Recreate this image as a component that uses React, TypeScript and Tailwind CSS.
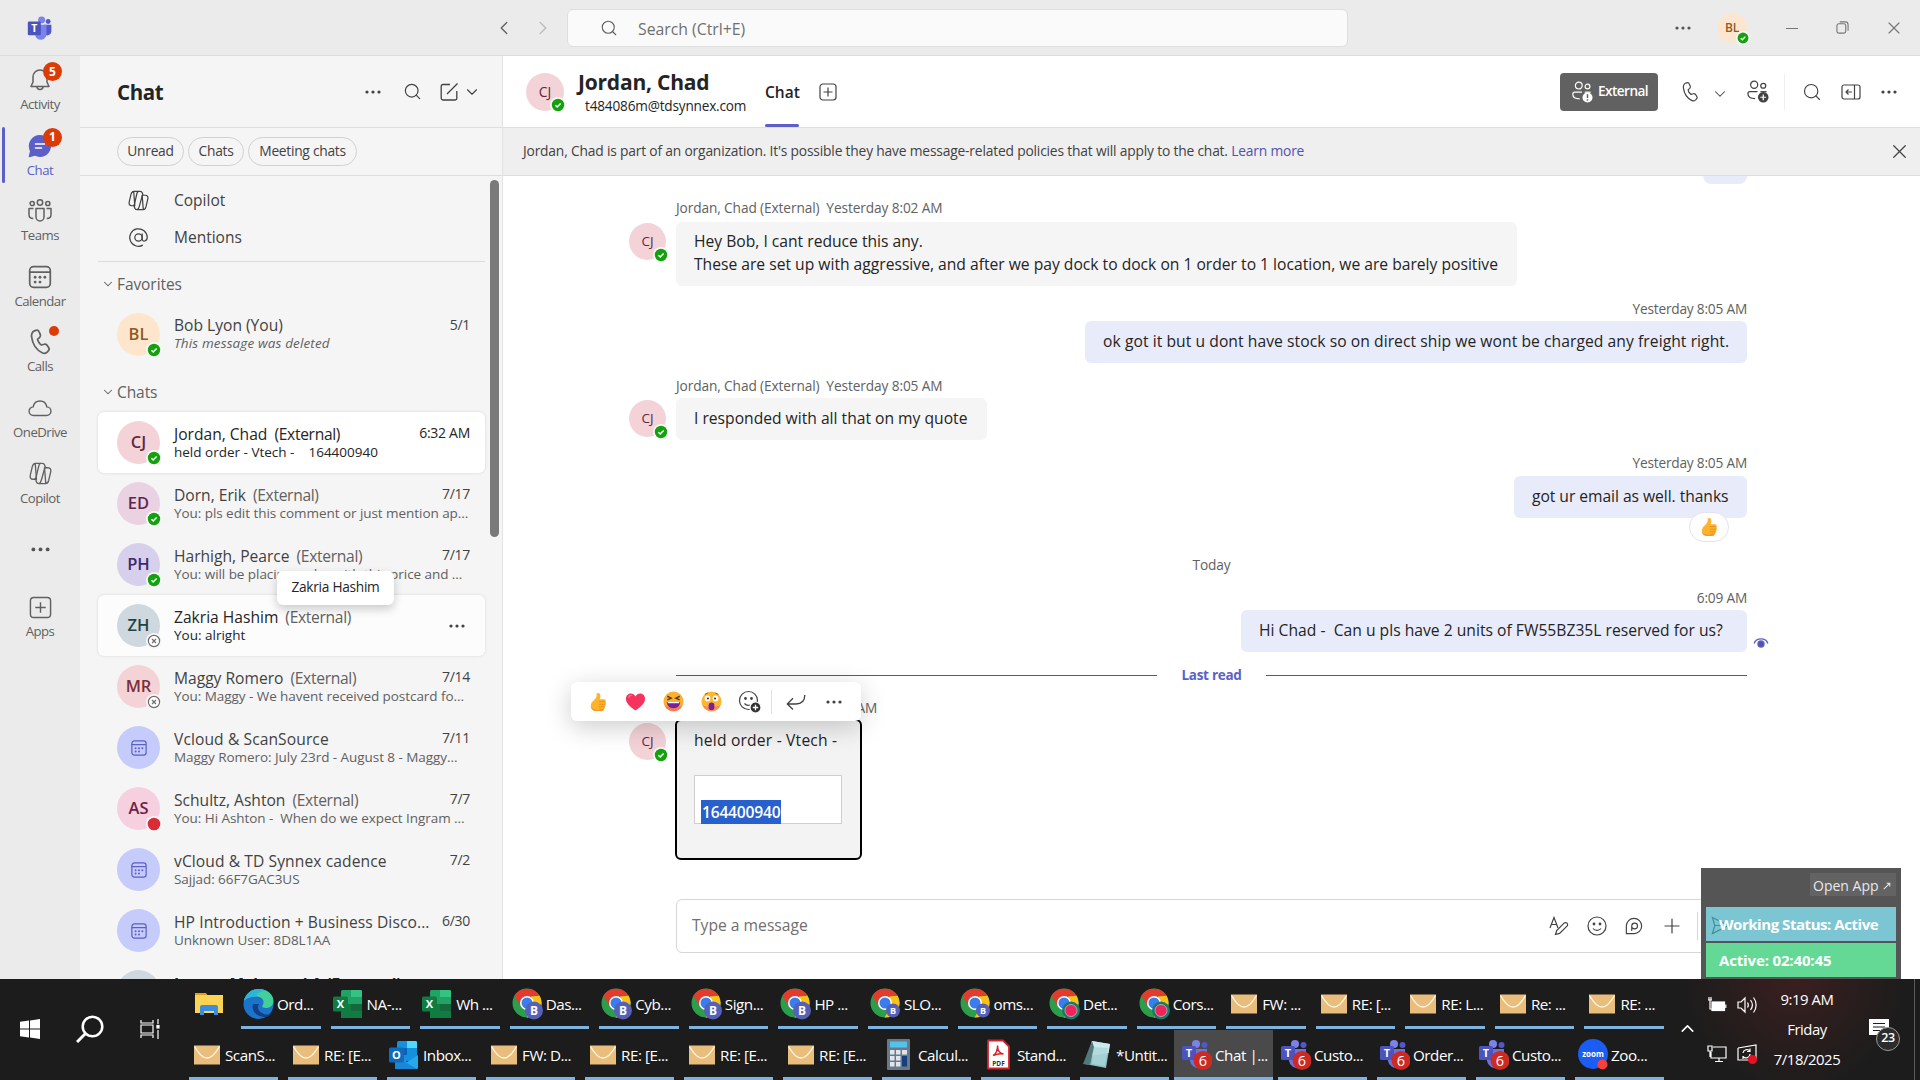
import type { ReactNode } from 'react'
import { ChevronDown, ChevronLeft, ChevronRight, ChevronUp, Search, X, Plus } from 'lucide-react'
import clsx from 'clsx'

type Status = 'available' | 'offline' | 'busy' | null

type ChatItem = {
  initials?: string
  color: string
  name: string
  external?: boolean
  preview: string
  date?: string
  status: Status
  state?: 'selected' | 'hover'
}

const chats: ChatItem[] = [
  { initials: 'CJ', color: 'bg-[#f4d3d8] text-[#5c2a3c]', name: 'Jordan, Chad', external: true, preview: 'held order - Vtech -    164400940', date: '6:32 AM', status: 'available', state: 'selected' },
  { initials: 'ED', color: 'bg-[#ebd2e3] text-[#5e2750]', name: 'Dorn, Erik', external: true, preview: 'You: pls edit this comment or just mention ap...', date: '7/17', status: 'available' },
  { initials: 'PH', color: 'bg-[#d7d0ec] text-[#3b2a70]', name: 'Harhigh, Pearce', external: true, preview: 'You: will be placing order with this price and ...', date: '7/17', status: 'available' },
  { initials: 'ZH', color: 'bg-[#cfd8de] text-[#1f4448]', name: 'Zakria Hashim', external: true, preview: 'You: alright', status: 'offline', state: 'hover' },
  { initials: 'MR', color: 'bg-[#f4d3d6] text-[#7a2f3d]', name: 'Maggy Romero', external: true, preview: 'You: Maggy - We havent received postcard fo...', date: '7/14', status: 'offline' },
  { color: 'bg-[#c5cbfa]', name: 'Vcloud & ScanSource', preview: 'Maggy Romero: July 23rd - August 8 - Maggy...', date: '7/11', status: null },
  { initials: 'AS', color: 'bg-[#f6d0df] text-[#6e2145]', name: 'Schultz, Ashton', external: true, preview: 'You: Hi Ashton -  When do we expect Ingram ...', date: '7/7', status: 'busy' },
  { color: 'bg-[#c5cbfa]', name: 'vCloud & TD Synnex cadence', preview: 'Sajjad: 66F7GAC3US', date: '7/2', status: null },
  { color: 'bg-[#c5cbfa]', name: 'HP Introduction + Business Disco...', preview: 'Unknown User: 8D8L1AA', date: '6/30', status: null },
]

function Dots({ className = 'w-4' }: { className?: string }) {
  return (
    <svg viewBox="0 0 16 4" className={className} fill="currentColor">
      <circle cx="2" cy="2" r="1.6" />
      <circle cx="8" cy="2" r="1.6" />
      <circle cx="14" cy="2" r="1.6" />
    </svg>
  )
}

function StatusDot({ status, size = 'w-4 h-4' }: { status: Status; size?: string }) {
  if (!status) return null
  return (
    <svg viewBox="0 0 16 16" className={clsx('absolute', size)}>
      <circle cx="8" cy="8" r="8" fill="#f7f7f7" />
      {status === 'available' && (
        <>
          <circle cx="8" cy="8" r="6.2" fill="#13a10e" />
          <path d="M5.4 8.3l1.8 1.7 3.4-3.5" fill="none" stroke="#fff" strokeWidth="1.5" />
        </>
      )}
      {status === 'busy' && <circle cx="8" cy="8" r="6.3" fill="#d92c37" />}
      {status === 'offline' && (
        <>
          <circle cx="8" cy="8" r="5.6" fill="#fff" stroke="#6e6e6e" strokeWidth="1.2" />
          <path d="M6 6l4 4M10 6l-4 4" stroke="#6e6e6e" strokeWidth="1.2" />
        </>
      )}
    </svg>
  )
}

function CalendarIcon({ className }: { className?: string }) {
  return (
    <svg viewBox="0 0 24 24" className={className} fill="none" stroke="currentColor" strokeWidth="1.6">
      <rect x="2.5" y="2.5" width="19" height="19" rx="3.5" />
      <path d="M2.5 7.5h19" />
      <g fill="currentColor" stroke="none">
        <circle cx="7.5" cy="12.2" r="1.3" />
        <circle cx="12" cy="12.2" r="1.3" />
        <circle cx="16.5" cy="12.2" r="1.3" />
        <circle cx="7.5" cy="16.7" r="1.3" />
        <circle cx="12" cy="16.7" r="1.3" />
      </g>
    </svg>
  )
}

function CopilotIcon({ className }: { className?: string }) {
  return (
    <svg viewBox="0 0 24 24" className={className} fill="none" stroke="currentColor" strokeWidth="1.4" strokeLinejoin="round">
      <path d="M6.500 1.500h7.200c1.500 0 2.300.6 2.700 1.900l.8 2.600M7.800 18H4.200C1.800 18 .7 16.200 1.400 13.500l2-8.500C4 2.800 5 1.500 6.500 1.500z" />
      <path d="M17.500 22.500h-7.200c-1.500 0-2.200-.6-2.600-1.900L6.900 18M16.200 6h3.600c2.400 0 3.500 1.800 2.800 4.500l-2 8.500c-.6 2.200-1.600 3.500-3.100 3.500z" />
      <path d="M12.200 1.500c-1.200.3-1.700 1.200-2 2.500L7.500 15.500c-.3 1.300-.8 2.300-1.800 2.500M16.500 6L13 18.500c-.4 1.700-1 3.500-2.500 4" />
    </svg>
  )
}

function PhoneIcon({ className, width = 1.5 }: { className?: string; width?: number }) {
  return (
    <svg viewBox="0 0 24 24" className={className} fill="none" stroke="currentColor" strokeWidth={width} strokeLinejoin="round">
      <path d="M7.100 2.400l1.500-.4c1.100-.3 2.200.2 2.600 1.200l1 2.300c.4.9.2 1.900-.5 2.600L9.900 9.700c.2 1.400 1.900 4.200 3.300 4.900l2.300-.7c.9-.3 1.900.1 2.500.8l1.400 2.100c.6.9.5 2.100-.3 2.800l-1 1c-1.100 1-2.600 1.400-3.900.8C8.900 18.900 5.500 13.200 4.800 7.500c-.3-1.600.5-4.600 2.300-5.100z" />
    </svg>
  )
}

function TeamsPeople({ className }: { className?: string }) {
  return (
    <svg viewBox="0 0 24 24" className={className} fill="none" stroke="currentColor" strokeWidth="1.5">
      <circle cx="12" cy="3.500" r="2.700" />
      <circle cx="4.200" cy="4.500" r="2.100" />
      <circle cx="19.800" cy="4.500" r="2.100" />
      <path d="M8 9.500h8v8.500a4 4 0 0 1-8 0z" strokeLinejoin="round" />
      <path d="M5.500 9.500H1v6c0 2.300 1.600 4 4.200 4M18.500 9.500H23v6c0 2.300-1.600 4-4.200 4" strokeLinejoin="round" />
    </svg>
  )
}

function PeopleBadge({ className, mark }: { className?: string; mark: 'plus' | 'alert' }) {
  return (
    <svg viewBox="0 0 24 24" className={className} fill="none" stroke="currentColor" strokeWidth="1.3">
      <circle cx="8.500" cy="5" r="3.700" />
      <circle cx="18" cy="6" r="2.600" />
      <path d="M12 12.200H4.200c-1.300 0-2.200.9-2.200 2.200 0 3.400 2.800 5 7.500 5" />
      <path d="M15 12.200h6.500" />
      <circle cx="18" cy="18" r="5.500" fill="currentColor" stroke="none" />
      {mark === 'plus' ? (
        <path d="M18 15v6M15 18h6" stroke="#fff" />
      ) : (
        <path d="M18 14.500v4M18 20v1.600" stroke="#616161" strokeWidth="1.6" />
      )}
    </svg>
  )
}

function TeamsLogo({ className }: { className?: string }) {
  return (
    <svg viewBox="0 0 32 32" className={className}>
      <circle cx="26" cy="8" r="3" fill="#5059c9" />
      <path d="M21 12h9v9a5 5 0 0 1-9 2z" fill="#5059c9" />
      <circle cx="18" cy="6" r="4.300" fill="#7b83eb" />
      <path d="M10 12h14v11a7 7 0 0 1-14 1z" fill="#7b83eb" />
      <rect x="1" y="8" width="16" height="17" rx="1.500" fill="#4b53bc" />
      <text x="9" y="21.500" fontSize="13" fontWeight="bold" fill="#fff" textAnchor="middle" fontFamily="Open Sans">
        T
      </text>
    </svg>
  )
}

function ThumbsUp({ className }: { className?: string }) {
  return (
    <svg viewBox="0 0 20 22" className={className}>
      <path d="M10 1c2 0 3 1.500 2.600 4l-.6 3h4.500c2 0 2.500 1.500 1.800 2.800.7.800.7 2-.1 2.700.5.9.3 2-.6 2.600.300 1-.100 2-1 2.500-.5 1.600-1.600 2.400-3.600 2.400H8c-3.500 0-6-2-6-5.500 0-3.700 2-5 4-7 1.500-1.500 2.500-3 2.500-5C8.500 1.800 9 1 10 1z" fill="#fdb32b" />
      <path d="M11 10.500h6.500M11 13.500h7M11 16.300h6.200M11.500 19h5" stroke="#e88a1c" strokeWidth=".9" />
      <path d="M2.500 17c1 3 3 4 6 4h4.500c1.500 0 2.500-.5 3-1.500-4 .5-9.500.5-13.500-2.500z" fill="#f58c2e" opacity=".7" />
    </svg>
  )
}

function Heart({ className }: { className?: string }) {
  return (
    <svg viewBox="0 0 22 20" className={className}>
      <path d="M11 19C7 16 1 12 1 6.500 1 3.500 3.200 1 6 1c2.200 0 4 1.200 5 3.200C12 2.200 13.800 1 16 1c2.800 0 5 2.500 5 5.500C21 12 15 16 11 19z" fill="#f5335d" />
      <path d="M4 5c.5-1.500 1.500-2 2.500-2" stroke="#ff7b95" strokeWidth="1.300" fill="none" strokeLinecap="round" />
    </svg>
  )
}

function Laugh({ className }: { className?: string }) {
  return (
    <svg viewBox="0 0 22 22" className={className}>
      <circle cx="11" cy="11" r="10.500" fill="#fdb02f" />
      <path d="M1.500 15a10.500 10.500 0 0 0 19 0c-5 3-14 3-19 0z" fill="#f7775a" />
      <path d="M4.500 5.500l4 2-4 1.800M17.500 5.500l-4 2 4 1.800" stroke="#5b3a24" strokeWidth="1.500" fill="none" />
      <path d="M4 11.500h14c0 4-3 6.500-7 6.500s-7-2.500-7-6.500z" fill="#7a1fa0" />
      <path d="M5 11.500h12v1.300H5z" fill="#fff" />
    </svg>
  )
}

function Surprised({ className }: { className?: string }) {
  return (
    <svg viewBox="0 0 22 22" className={className}>
      <circle cx="11" cy="11" r="10.500" fill="#fdb62f" />
      <path d="M1.500 15a10.500 10.500 0 0 0 19 0c-5 2-14 2-19 0z" fill="#f88c5a" />
      <circle cx="6.800" cy="7.800" r="3" fill="#fff" />
      <circle cx="15.200" cy="7.800" r="3" fill="#fff" />
      <circle cx="7.300" cy="7.800" r="1.100" fill="#402a32" />
      <circle cx="14.700" cy="7.800" r="1.100" fill="#402a32" />
      <path d="M4 3.500l3-1.200M18 3.500l-3-1.200" stroke="#8a5320" strokeWidth="1" />
      <rect x="8" y="12" width="6" height="8" rx="3" fill="#7a1fa0" />
    </svg>
  )
}

function RailItem({ icon, label, active, badge }: { icon: ReactNode; label: string; active?: boolean; badge?: ReactNode }) {
  return (
    <div className={clsx('relative flex h-[65.6px] flex-col items-center pt-3 text-[13.2px]', active ? 'text-[#5b5fc7]' : 'text-[#616161]')}>
      {active && <span className="absolute left-0.5 top-[5px] h-14 w-[3px] rounded bg-[#5b5fc7]" />}
      <div className="relative flex h-6 w-6 items-center justify-center">
        {icon}
        {badge}
      </div>
      <span className="mt-[3px] leading-[18px] tracking-[-0.04em]">{label}</span>
    </div>
  )
}

function CountBadge({ children }: { children: ReactNode }) {
  return (
    <span className="absolute -top-[6px] left-[15px] flex h-[19px] w-[19px] items-center justify-center rounded-full bg-[#dc3b06] text-[12px] font-bold text-white">
      {children}
    </span>
  )
}

function Rail() {
  return (
    <nav className="w-20 shrink-0 bg-[#ebebeb]">
      <RailItem
        label="Activity"
        badge={<CountBadge>5</CountBadge>}
        icon={
          <svg viewBox="0 0 24 24" className="h-6 w-6" fill="none" stroke="currentColor" strokeWidth="1.5" strokeLinejoin="round">
            <path d="M12 2a7 7 0 0 0-7 7v5l-2 4.500h18L19 14V9a7 7 0 0 0-7-7zM9 18.500a3 3 0 0 0 6 0" />
          </svg>
        }
      />
      <RailItem
        label="Chat"
        active
        badge={<CountBadge>1</CountBadge>}
        icon={
          <svg viewBox="0 0 24 24" className="h-6 w-6">
            <path d="M12 1a11 11 0 1 1-5 20.800l-5.500 1.400c-.5.100-.9-.3-.8-.8L2 17A11 11 0 0 1 12 1z" fill="#5b5fc7" />
            <path d="M7.500 10h9M7.500 14h6" stroke="#fff" strokeWidth="1.6" strokeLinecap="round" />
          </svg>
        }
      />
      <RailItem label="Teams" icon={<TeamsPeople className="h-6 w-6" />} />
      <RailItem label="Calendar" icon={<CalendarIcon className="h-[26px] w-[26px] shrink-0" />} />
      <RailItem
        label="Calls"
        badge={<span className="absolute -top-1 right-[-7px] h-2.5 w-2.5 rounded-full bg-[#dc3b06]" />}
        icon={<PhoneIcon className="h-7 w-7 shrink-0" />}
      />
      <RailItem
        label="OneDrive"
        icon={
          <svg viewBox="0 0 24 24" className="h-6 w-6" fill="none" stroke="currentColor" strokeWidth="1.4">
            <path d="M5.500 19.500a4.300 4.300 0 0 1-.3-8.600C5.800 7.500 8.500 5 12 5s6.200 2.500 6.800 5.900a4.300 4.300 0 0 1-.3 8.600z" />
          </svg>
        }
      />
      <RailItem label="Copilot" icon={<CopilotIcon className="h-[23px] w-[23px]" />} />
      <div className="flex h-[66px] items-center justify-center pt-0.5 text-[#555]">
        <Dots className="w-[19px]" />
      </div>
      <div className="pt-0.5">
        <RailItem
          label="Apps"
          icon={
            <svg viewBox="0 0 24 24" className="h-[23px] w-[23px]" fill="none" stroke="currentColor" strokeWidth="1.5">
              <rect x="1.500" y="1.500" width="21" height="21" rx="3.500" />
              <path d="M12 6.500v11M6.500 12h11" />
            </svg>
          }
        />
      </div>
    </nav>
  )
}

function TitleBar() {
  return (
    <header className="flex h-14 shrink-0 items-center border-b border-[#dcdcdc] bg-[#ebebeb]">
      <div className="flex w-20 justify-center">
        <TeamsLogo className="h-[26px] w-[26px]" />
      </div>
      <div className="flex flex-1 items-center pl-[413px]">
        <ChevronLeft className="h-[22px] w-[22px] text-[#616161]" strokeWidth={1.5} />
        <ChevronRight className="ml-[17px] h-[22px] w-[22px] text-[#bdbdbd]" strokeWidth={1.5} />
        <div className="ml-[13px] mt-px flex h-[38px] w-[781px] items-center rounded-md border border-[#dedede] bg-[#fafafa]">
          <Search className="ml-8 h-[18px] w-[18px] text-[#616161]" strokeWidth={1.5} />
          <span className="ml-5 mt-1 text-[15.8px] text-[#707070]">Search (Ctrl+E)</span>
        </div>
      </div>
      <div className="flex items-center pr-4">
        <Dots className="w-4 text-[#555]" />
        <div className="relative ml-[26px] flex h-[30px] w-[30px] items-center justify-center rounded-full bg-[#fde6cf] text-xs font-semibold tracking-tight text-[#8e5a26]">
          BL
          <span className="absolute left-[19px] top-[18px]">
            <StatusDot status="available" size="w-[14px] h-[14px]" />
          </span>
        </div>
        <span className="ml-[39px] mt-px h-px w-3 bg-[#777]" />
        <svg viewBox="0 0 14 14" className="ml-[38px] h-[13px] w-[13px]" fill="none" stroke="#777" strokeWidth="1.2">
          <rect x="1" y="3" width="9.500" height="10" rx="2" />
          <path d="M4 1h6c1.800 0 3 1.200 3 3v6.500" />
        </svg>
        <X className="ml-[35px] h-5 w-5 text-[#777]" strokeWidth={1.4} />
      </div>
    </header>
  )
}

function Avatar({ item }: { item: ChatItem }) {
  return (
    <div className={clsx('relative flex h-[43px] w-[43px] shrink-0 items-center justify-center rounded-full text-[16.5px] font-semibold', item.color)}>
      {item.initials ?? <CalendarIcon className="h-[18px] w-[18px] text-[#5b5fc7]" />}
      <span className="absolute left-[29px] top-[29px]">
        <StatusDot status={item.status} />
      </span>
    </div>
  )
}

function ChatRow({ item }: { item: ChatItem }) {
  const strong = item.state !== undefined
  return (
    <div
      className={clsx(
        'flex h-[61px] items-center rounded-md pl-[19px] pr-[15px]',
        item.state === 'selected' && 'bg-white shadow-[0_0_3px_rgba(0,0,0,0.14)]',
        item.state === 'hover' && 'bg-[#fcfcfc] shadow-[0_0_3px_rgba(0,0,0,0.12)]',
      )}
    >
      <Avatar item={item} />
      <div className="ml-[14px] min-w-0 flex-1">
        <div className={clsx('flex items-center justify-between leading-[19px]', strong ? 'text-[#242424]' : 'text-[#424242]')}>
          <span className={clsx('whitespace-nowrap text-[15.6px]', !item.external && 'tracking-[0.006em]')}>
            {item.name}
            {item.external && <span className={clsx('ml-[7px] tracking-[-0.02em]', item.state !== 'selected' && 'text-[#616161]')}>(External)</span>}
          </span>
          {item.date && <span className="-mt-1 text-[14px] tracking-[-0.02em]">{item.date}</span>}
        </div>
        <div className={clsx('whitespace-pre text-[13.5px] leading-[17px]', strong ? 'text-[#242424]' : 'tracking-[-0.004em] text-[#616161]')}>{item.preview}</div>
      </div>
      {item.state === 'hover' && <Dots className="mr-[5px] w-4 text-[#424242]" />}
    </div>
  )
}

function SectionTitle({ children }: { children: ReactNode }) {
  return (
    <div className="flex items-center gap-1 pl-[3px] text-[15.5px] leading-5 tracking-[-0.005em] text-[#616161]">
      <ChevronDown className="-mr-0.5 h-3.5 w-3.5 shrink-0" strokeWidth={1.8} />
      {children}
    </div>
  )
}

function ChatList() {
  return (
    <aside className="flex w-[423px] shrink-0 flex-col border-r border-[#e3e3e3] bg-[#f5f5f5]">
      <div className="flex h-[72px] shrink-0 items-center border-b border-[#dedede] pl-[37px] text-[#424242]">
        <h1 className="flex-1 pt-0.5 text-[20.5px] font-bold tracking-[-0.02em] text-[#242424]">Chat</h1>
        <Dots className="w-4" />
        <Search className="ml-[22px] h-[19px] w-[19px]" strokeWidth={1.5} />
        <svg viewBox="0 0 20 20" className="ml-[17px] h-5 w-5" fill="none" stroke="currentColor" strokeWidth="1.3">
          <path d="M11 2.500H4A1.800 1.800 0 0 0 2.200 4.300v12A1.800 1.800 0 0 0 4 18h12a1.800 1.800 0 0 0 1.800-1.800V9M8 12L18.500 1.500" />
        </svg>
        <ChevronDown className="ml-1 mr-[21px] h-[18px] w-[18px]" strokeWidth={1.5} />
      </div>
      <div className="flex h-12 shrink-0 items-center gap-1 border-b border-[#dedede] pl-[37px] text-[13.8px] tracking-[-0.02em] text-[#424242]">
        <span className="flex h-[29px] w-[67px] items-center justify-center rounded-full border border-[#d1d1d1]">Unread</span>
        <span className="flex h-[29px] w-14 items-center justify-center rounded-full border border-[#d1d1d1]">Chats</span>
        <span className="flex h-[29px] w-[109px] items-center justify-center rounded-full border border-[#d1d1d1]">Meeting chats</span>
      </div>
      <div className="relative flex-1 overflow-hidden pl-[18px] pr-[17px]">
        <div className="absolute right-[3px] top-1 h-[357px] w-[9px] rounded-full bg-[#7a7a7a]" />
        <div className="flex h-[37px] items-center pl-[30px] pt-3 text-[15.5px] text-[#424242]">
          <CopilotIcon className="h-[21px] w-[21px]" />
          <span className="ml-[25px]">Copilot</span>
        </div>
        <div className="flex h-[37px] items-center pl-[30px] pt-3 text-[15.5px] text-[#424242]">
          <svg viewBox="0 0 24 24" className="h-[21px] w-[21px]" fill="none" stroke="currentColor" strokeWidth="1.4">
            <circle cx="12" cy="12" r="4.200" />
            <path d="M16.200 7.500v6.300c0 3.600 5.800 3 5.800-2A10 10 0 1 0 17 20.700" />
          </svg>
          <span className="ml-[25px]">Mentions</span>
        </div>
        <div className="mb-3 mt-[11px] h-px bg-[#dcdcdc]" />
        <SectionTitle>Favorites</SectionTitle>
        <div className="mt-[10px] flex h-[61px] items-center pl-[19px] pr-[15px]">
          <Avatar item={{ initials: 'BL', color: 'bg-[#fde6cc] text-[#8e5a26]', name: '', preview: '', status: 'available' }} />
          <div className="-mt-0.5 ml-[14px] flex-1 text-[#424242]">
            <div className="flex justify-between leading-[19px]">
              <span className="text-[15.6px]">Bob Lyon (You)</span>
              <span className="-mt-px text-[14px] tracking-[-0.02em]">5/1</span>
            </div>
            <div className="text-[13.5px] italic leading-[17px] tracking-[0.01em] text-[#616161]">This message was deleted</div>
          </div>
        </div>
        <div className="mb-[10px] mt-[17px]">
          <SectionTitle>Chats</SectionTitle>
        </div>
        {chats.map((c) => (
          <ChatRow key={c.name} item={c} />
        ))}
        <div className="flex h-[61px] pl-[19px] pr-[15px] pt-[9px]">
          <div className="h-[43px] w-[43px] shrink-0 rounded-full bg-[#cfd8de]" />
          <div className="ml-[14px] flex flex-1 justify-between pt-[5px] text-[15.5px] font-bold leading-[19px] text-[#242424]">
            <span>Imran, Mehmood A (External)</span>
            <span className="text-[14px]">6/28</span>
          </div>
        </div>
        <div className="absolute left-[197px] top-[395px] flex h-[34px] w-[117px] items-center justify-center rounded-md bg-white pb-px text-[13.7px] tracking-[-0.02em] text-[#242424] shadow-[0_4px_10px_rgba(0,0,0,0.2)]">
          Zakria Hashim
        </div>
      </div>
    </aside>
  )
}

function MainHeader() {
  return (
    <div className="flex h-[72px] shrink-0 items-center border-b border-[#dedede] pl-[23px] text-[#424242]">
      <div className="relative flex h-[38px] w-[38px] items-center justify-center rounded-full bg-[#f4d3d8] text-[14px] font-medium text-[#5c2a3c]">
        CJ
        <span className="absolute left-[24px] top-[24px]">
          <StatusDot status="available" />
        </span>
      </div>
      <div className="ml-[14px] w-[187px] text-[#242424]">
        <div className="mt-1 text-[21px] font-bold leading-6 tracking-[-0.01em]">Jordan, Chad</div>
        <div className="pl-[7px] text-[13.6px] leading-6 tracking-[-0.013em]">t484086m@tdsynnex.com</div>
      </div>
      <div className="relative flex h-full w-[34px] items-center pt-0.5 text-[15.5px] font-semibold text-[#242424]">
        Chat
        <span className="absolute bottom-0 left-0 h-[3px] w-[34px] rounded bg-[#5b5fc7]" />
      </div>
      <svg viewBox="0 0 18 18" className="ml-5 h-[18px] w-[18px]" fill="none" stroke="currentColor" strokeWidth="1.2">
        <rect x="1" y="1" width="16" height="16" rx="3" />
        <path d="M9 4.500v9M4.500 9h9" />
      </svg>
      <div className="ml-auto flex h-[38px] w-[98px] items-center rounded bg-[#616161] pl-[11px] text-white">
        <PeopleBadge mark="alert" className="h-[22px] w-[22px]" />
        <span className="ml-[5px] text-[13.6px] font-semibold tracking-[-0.04em]">External</span>
      </div>
      <PhoneIcon className="ml-[21px] h-[22px] w-[22px]" width={1.3} />
      <ChevronDown className="ml-[10px] mt-1 h-[18px] w-[18px]" strokeWidth={1.4} />
      <PeopleBadge mark="plus" className="ml-[17px] h-[23px] w-[23px]" />
      <span className="ml-[15px] h-9 w-px bg-[#efefef]" />
      <Search className="ml-[17px] h-5 w-5" strokeWidth={1.4} />
      <svg viewBox="0 0 20 16" className="ml-[19px] h-4 w-5" fill="none" stroke="currentColor" strokeWidth="1.2">
        <rect x="1" y="1" width="18" height="14" rx="2" />
        <path d="M13.500 1v14M11 8H5M7.500 5.500L5 8l2.500 2.500" />
      </svg>
      <Dots className="ml-[20px] mr-[23px] w-4" />
    </div>
  )
}

function Meta({ children, right }: { children: ReactNode; right?: boolean }) {
  return (
    <div className={clsx('flex h-5 items-center whitespace-pre text-[13.7px] text-[#616161]', right ? 'justify-end tracking-[-0.015em]' : 'tracking-[-0.008em]')}>{children}</div>
  )
}

function Bubble({ children, className }: { children: ReactNode; className?: string }) {
  return <div className={clsx('relative rounded-md px-[18px] text-[#242424]', className)}>{children}</div>
}

function SenderAvatar() {
  return (
    <div className="relative ml-px mt-px flex h-[37px] w-[37px] shrink-0 items-center justify-center rounded-full bg-[#f4d3d8] text-[13.5px] font-medium text-[#5c2a3c]">
      CJ
      <span className="absolute left-6 top-[24px]">
        <StatusDot status="available" />
      </span>
    </div>
  )
}

function ReactionBar() {
  return (
    <div className="absolute -top-[39px] -left-[106px] z-10 flex h-[39px] w-[290px] items-center rounded-md bg-white pl-[17px] text-[#424242] shadow-[0_6px_26px_rgba(0,0,0,0.2)]">
      <ThumbsUp className="h-5 w-5" />
      <Heart className="ml-[17px] h-5 w-[21px]" />
      <Laugh className="ml-[17px] h-[21px] w-[21px]" />
      <Surprised className="ml-[17px] h-[21px] w-[21px]" />
      <svg viewBox="0 0 24 24" className="ml-[16px] h-6 w-6" fill="none" stroke="currentColor" strokeWidth="1.2">
        <circle cx="10.500" cy="10.500" r="9" />
        <circle cx="7.500" cy="8.500" r=".8" fill="currentColor" />
        <circle cx="13.500" cy="8.500" r=".8" fill="currentColor" />
        <path d="M6.500 13.500a5 5 0 0 0 5.500 1.500" />
        <circle cx="17.500" cy="17.500" r="5.500" fill="#333" stroke="#fff" />
        <path d="M17.500 14.800v5.400M14.800 17.500h5.400" stroke="#fff" strokeWidth="1.3" />
      </svg>
      <span className="ml-[9px] h-6 w-px bg-[#e0e0e0]" />
      <svg viewBox="0 0 20 16" className="ml-[14px] h-4 w-5" fill="none" stroke="currentColor" strokeWidth="1.3">
        <path d="M18.800 1c0 5.500-3 9-9 9H1.500M7 4.200L1.300 10 7 15.500" />
      </svg>
      <Dots className="ml-[20px] w-4" />
    </div>
  )
}

function Messages() {
  return (
    <div className="flex min-h-0 flex-1 flex-col pl-[125px] text-[15.65px]">
      <div className="flex w-[1119px] justify-end">
        <div className="h-2 w-11 rounded-b-lg bg-[#e8ebfa]" />
      </div>

      <div className="mt-[14px] pl-[48px]">
        <Meta>Jordan, Chad (External)  Yesterday 8:02 AM</Meta>
      </div>
      <div className="mt-1 flex">
        <SenderAvatar />
        <Bubble className="ml-[10px] h-16 w-[841px] bg-[#f5f5f5] pt-2 leading-[23px]">
          Hey Bob, I cant reduce this any.
          <br />
          <span className="whitespace-nowrap">These are set up with aggressive, and after we pay dock to dock on 1 order to 1 location, we are barely positive</span>
        </Bubble>
      </div>

      <div className="mt-[13px] flex w-[1119px] flex-col items-end">
        <Meta right>Yesterday 8:05 AM</Meta>
        <Bubble className="mt-0.5 flex h-[42px] w-[662px] items-center whitespace-nowrap bg-[#e8ebfa] tracking-[0.004em]">
          ok got it but u dont have stock so on direct ship we wont be charged any freight right.
        </Bubble>
      </div>

      <div className="mt-[13px] pl-[48px]">
        <Meta>Jordan, Chad (External)  Yesterday 8:05 AM</Meta>
      </div>
      <div className="mt-0.5 flex">
        <div className="pt-px">
          <SenderAvatar />
        </div>
        <Bubble className="ml-[10px] flex h-[42px] w-[311px] items-center bg-[#f5f5f5]">I responded with all that on my quote</Bubble>
      </div>

      <div className="mt-[13px] flex w-[1119px] flex-col items-end">
        <Meta right>Yesterday 8:05 AM</Meta>
        <Bubble className="mt-[3px] flex h-[42px] w-[233px] items-center whitespace-nowrap bg-[#e8ebfa] tracking-[-0.003em]">
          got ur email as well. thanks
          <span className="absolute right-[18px] top-9 flex h-[30px] w-10 items-center justify-center rounded-full border border-[#e3e3ea] bg-white">
            <ThumbsUp className="h-[22px] w-[18px]" />
          </span>
        </Bubble>
      </div>

      <div className="ml-[48px] mt-[37px] flex w-[1071px] justify-center">
        <Meta>Today</Meta>
      </div>

      <div className="mt-[13px] flex w-[1119px] flex-col items-end">
        <Meta right>6:09 AM</Meta>
        <Bubble className="mt-0.5 flex h-[42px] w-[506px] items-center whitespace-pre bg-[#e8ebfa] tracking-[0.001em]">
          Hi Chad -  Can u pls have 2 units of FW55BZ35L reserved for us?
          <svg viewBox="0 0 16 12" className="absolute -right-[22px] bottom-[3px] h-3 w-4" fill="none" stroke="#5b5fc7" strokeWidth="1.4">
            <path d="M1.200 6.500a7 6 0 0 1 13.600 0" />
            <circle cx="8" cy="7" r="3" fill="#4f52b2" />
          </svg>
        </Bubble>
      </div>

      <div className="ml-[48px] mt-[13px] flex h-5 w-[1071px] items-center gap-6 text-[13.5px] font-bold tracking-[-0.02em] text-[#5b5fc7]">
        <span className="h-px flex-1 bg-[#5054a5]" />
        Last read
        <span className="h-px flex-1 bg-[#5054a5]" />
      </div>

      <div className="mt-[13px] pl-[48px]">
        <Meta>{'Jordan, Chad (External)  6:32 AM'}</Meta>
      </div>
      <div className="mt-px flex">
        <div className="pt-[3px]">
          <SenderAvatar />
        </div>
        <div className="relative ml-[9px] h-[141px] w-[187px] rounded-md border-2 border-black bg-[#f3f3f3] pl-[17px] pt-[7px] leading-6 tracking-[0.012em] text-[#242424]">
          <ReactionBar />
          held order - Vtech -
          <div className="mt-[23px] h-[49px] w-[148px] border border-[#cfcfcf] bg-white pl-[6px] pt-6">
            <span className="block h-6 w-20 bg-[#2860ce] pl-px font-semibold leading-6 tracking-[-0.015em] text-white">164400940</span>
          </div>
        </div>
      </div>

      <div className="ml-[48px] mt-[39px] flex h-[54px] w-[1071px] shrink-0 items-center rounded-md border border-[#d6d6d6] pl-[15px] text-[#424242]">
        <span className="flex-1 text-[#707070]">Type a message</span>
        <svg viewBox="0 0 20 20" className="h-[20px] w-[20px]" fill="none" stroke="currentColor" strokeWidth="1.2">
          <path d="M1 12L5 1.500 9 12M2.500 8.500h5" />
          <path d="M6.500 18.500l1.200-4L15 7.200a2 2 0 0 1 3 3l-7.400 7.200z" />
        </svg>
        <svg viewBox="0 0 20 20" className="ml-[18px] h-[20px] w-[20px]" fill="none" stroke="currentColor" strokeWidth="1.2">
          <circle cx="10" cy="10" r="9" />
          <circle cx="7" cy="8" r=".8" fill="currentColor" />
          <circle cx="13" cy="8" r=".8" fill="currentColor" />
          <path d="M6 12.500c2 2.500 6 2.500 8 0" />
        </svg>
        <svg viewBox="0 0 20 20" className="ml-[18px] h-[18px] w-[18px]" fill="none" stroke="currentColor" strokeWidth="1.3">
          <path d="M1.500 18.500V10A8.500 8.500 0 1 1 10 18.500z" />
          <path d="M7.500 15.500v-5.500a3.200 3.200 0 1 1 3.200 3.200c-1.500 0-3-.8-3.200-2.200" />
        </svg>
        <Plus className="ml-[17px] h-6 w-6" strokeWidth={1.2} />
        <span className="ml-[13px] mr-12 h-7 w-px bg-[#d6d6d6]" />
      </div>
    </div>
  )
}

function StatusWidget() {
  return (
    <div className="absolute left-[1701px] top-[868px] flex h-[111px] w-[200px] flex-col bg-[#555] px-[5px] pt-[5px] text-white">
      <div className="flex h-[23px] w-[86px] items-center gap-1 self-end bg-[#636363] pl-[3px] pt-0.5 text-[14px] text-[#e8e8e8]">
        Open App
        <svg viewBox="0 0 10 10" className="h-2 w-2" fill="none" stroke="currentColor" strokeWidth="1.3">
          <path d="M1 9l7-7M4.500 1.500h4v4" />
        </svg>
      </div>
      <div className="relative mt-[11px] flex h-[34px] items-center bg-[#7bc6d2] pl-[13px] text-[15px] font-bold tracking-[-0.03em]">
        <svg viewBox="0 0 20 20" className="absolute left-[5px] top-[9px] h-[19px] w-[19px]" fill="none" stroke="#3f8d96" strokeWidth="1.2">
          <path d="M1.500 1.500L18.500 10 1.500 18.500 4 10zM4 10h7" />
        </svg>
        <span className="relative">Working Status: Active</span>
      </div>
      <div className="mt-0.5 flex h-[34px] items-center bg-[#64d995] pl-[13px] text-[15px] font-bold tracking-[-0.01em]">Active: 02:40:45</div>
    </div>
  )
}

type AppKind = 'edge' | 'excel' | 'chromeB' | 'chromeSmall' | 'chromeRed' | 'mail' | 'outlook' | 'calc' | 'pdf' | 'note' | 'teams' | 'zoom'

const topApps: [AppKind, string][] = [
  ['edge', 'Ord...'], ['excel', 'NA-...'], ['excel', 'Wh ...'], ['chromeB', 'Das...'], ['chromeB', 'Cyb...'], ['chromeB', 'Sign...'],
  ['chromeB', 'HP ...'], ['chromeSmall', 'SLO...'], ['chromeSmall', 'oms...'], ['chromeRed', 'Det...'], ['chromeRed', 'Cors...'],
  ['mail', 'FW: ...'], ['mail', 'RE: [...'], ['mail', 'RE: L...'], ['mail', 'Re: ...'], ['mail', 'RE: ...'],
]

const bottomApps: [AppKind, string][] = [
  ['mail', 'ScanS...'], ['mail', 'RE: [E...'], ['outlook', 'Inbox...'], ['mail', 'FW: D...'], ['mail', 'RE: [E...'], ['mail', 'RE: [E...'],
  ['mail', 'RE: [E...'], ['calc', 'Calcul...'], ['pdf', 'Stand...'], ['note', '*Untit...'], ['teams', 'Chat |...'], ['teams', 'Custo...'],
  ['teams', 'Order...'], ['teams', 'Custo...'], ['zoom', 'Zoo...'],
]

function SvgLabel({ x, y, size, children }: { x: number; y: number; size: number; children: string }) {
  return (
    <text x={x} y={y} fontSize={size} fontWeight="bold" fill="#fff" textAnchor="middle" fontFamily="Open Sans">
      {children}
    </text>
  )
}

function Chrome({ children }: { children?: ReactNode }) {
  return (
    <>
      <circle cx="16" cy="15" r="14.500" fill="#2c9e4b" />
      <path d="M3.500 7.800A14.500 14.500 0 0 1 28.500 7.800L16 9 10 18.500z" fill="#e33b2e" />
      <path d="M28.600 7.800A14.500 14.500 0 0 1 15.500 29.500L22 18.500 20 8.500z" fill="#fbc116" />
      <circle cx="16" cy="15" r="7" fill="#fff" />
      <circle cx="16" cy="15" r="5.500" fill="#3b7ded" />
      {children}
    </>
  )
}

function AppIcon({ kind }: { kind: AppKind }) {
  return (
    <svg viewBox="0 0 32 32" className="h-8 w-8 shrink-0">
      {kind === 'edge' && (
        <>
          <circle cx="16.500" cy="16" r="15" fill="#1b74c9" />
          <path d="M2 13C4 5 10 1 17 1c8 0 14.500 5 14.500 12 0 4.500-3.500 7-7.500 7-3 0-4.500-1-3.500-2.500 3-5-1-9-6-9C9 8.500 4 10 2 13z" fill="#43cf9a" />
          <path d="M2 13C4 5 10 1 17 1c3 0 5 .5 7 1.800C16 3 14 8 14.500 8.500 9 8.500 4 10 2 13z" fill="#2ab5dd" />
          <path d="M11 16c-2 7 4 13 12 13 3 0 5-1.500 7-4-3 2-7 2-10 0-4-2-5-6-3-9z" fill="#123f86" />
        </>
      )}
      {kind === 'excel' && (
        <>
          <rect x="9" y="2" width="21" height="28" rx="1.500" fill="#21a366" />
          <path d="M19 2h9.500a1.500 1.500 0 0 1 1.500 1.500V9H19z" fill="#33c481" />
          <path d="M9 16h21v12.500a1.500 1.500 0 0 1-1.500 1.500h-18A1.500 1.500 0 0 1 9 28.500z" fill="#107c41" />
          <path d="M19 16h11v7H19z" fill="#185c37" opacity=".6" />
          <rect x="1" y="8.500" width="15" height="15" rx="1.500" fill="#107c41" />
          <SvgLabel x={8.5} y={20} size={11}>X</SvgLabel>
        </>
      )}
      {kind === 'chromeB' && (
        <Chrome>
          <circle cx="23" cy="22.500" r="9" fill="#5560b8" />
          <SvgLabel x={23} y={27} size={12}>B</SvgLabel>
        </Chrome>
      )}
      {kind === 'chromeSmall' && (
        <Chrome>
          <circle cx="24" cy="22.500" r="7" fill="#5560b8" />
          <SvgLabel x={24} y={26} size={9}>B</SvgLabel>
        </Chrome>
      )}
      {kind === 'chromeRed' && (
        <Chrome>
          <circle cx="23" cy="22.500" r="9" fill="#157a6e" />
          <circle cx="23" cy="22.500" r="6" fill="#f0245c" stroke="#b9a3a0" strokeWidth="1" />
        </Chrome>
      )}
      {kind === 'mail' && (
        <>
          <rect x="4" y="6.500" width="26" height="19" fill="#e9bd7c" />
          <path d="M4.500 7.500c4 7 9 11.500 12.500 11.500S25.500 14.500 29.500 7.500" fill="none" stroke="#fff5e2" strokeWidth="1.5" />
        </>
      )}
      {kind === 'outlook' && (
        <>
          <rect x="9" y="2" width="20" height="20" rx="1.500" fill="#1490df" />
          <path d="M19 2h8.500A1.500 1.500 0 0 1 29 3.500V9H19z" fill="#50d9ff" />
          <path d="M9 9h10v7H9z" fill="#0a62b5" />
          <path d="M7 16l12 7 11-7v12.500a1.500 1.500 0 0 1-1.500 1.500H8.500A1.500 1.500 0 0 1 7 28.500z" fill="#28a8ea" />
          <path d="M7 30h22L7 17z" fill="#1a86d8" />
          <rect x="1" y="8.500" width="15" height="15" rx="1.500" fill="#0f6cbd" />
          <SvgLabel x={8.5} y={20} size={11}>O</SvgLabel>
        </>
      )}
      {kind === 'calc' && (
        <>
          <rect x="4" y="0" width="23" height="31" rx="1" fill="#67798a" />
          <rect x="7" y="2.500" width="17" height="6" fill="#54c3e8" />
          <path d="M7 11h4.500v4.500H7zM13 11h4.500v4.500H13zM19 11h5v4.500h-5zM7 17h4.500v4.500H7zM13 17h4.500v4.500H13zM7 23h4.500v4.500H7zM13 23h4.500v4.500H13z" fill="#dfe5ea" />
          <path d="M19 17h5v10.500h-5z" fill="#173f7a" />
        </>
      )}
      {kind === 'pdf' && (
        <>
          <path d="M6 1.500h15l6 6v22H6z" fill="#fff" stroke="#d5222a" strokeWidth="1.8" strokeLinejoin="round" />
          <path d="M11 16.500c3-1.500 5-6 4.500-10 0 5 2.500 8 6 8.500-3.500-.5-7 0-10.500 1.500z" fill="none" stroke="#d5222a" strokeWidth="1.5" />
          <text x="16.500" y="26.500" fontSize="6.500" fontWeight="bold" fill="#333" textAnchor="middle" fontFamily="Open Sans">
            PDF
          </text>
        </>
      )}
      {kind === 'note' && (
        <>
          <path d="M11 2l18 3-4 24-21-4z" fill="#8dbcc1" />
          <path d="M11 2l18 3-1.500 9L8 17z" fill="#cfeaec" />
          <path d="M12 8l15 1-3 18-13-2z" fill="#a9d6da" opacity=".8" />
          <path d="M2 25l9-23 2 6-4 18z" fill="#52777d" />
        </>
      )}
      {kind === 'teams' && (
        <>
          <circle cx="16" cy="5" r="4" fill="#7b83eb" />
          <circle cx="24.500" cy="6" r="3" fill="#5059c9" />
          <path d="M10 10h17v9a8 8 0 0 1-17 3z" fill="#6a72dd" />
          <rect x="2" y="7" width="14" height="14" rx="1.500" fill="#4b53bc" />
          <SvgLabel x={9} y={18} size={11}>T</SvgLabel>
          <circle cx="23" cy="21.500" r="9.500" fill="#cc2a22" />
          <text x="23" y="27" fontSize="14.500" fill="#fff" textAnchor="middle" fontFamily="Open Sans">
            6
          </text>
        </>
      )}
      {kind === 'zoom' && (
        <>
          <circle cx="17" cy="15" r="15" fill="#1b5cf5" />
          <SvgLabel x={17} y={17.5} size={8}>zoom</SvgLabel>
          <circle cx="26.500" cy="25.500" r="5" fill="#fb3f3a" />
        </>
      )}
    </svg>
  )
}

function TaskButton({ kind, label, active }: { kind: AppKind; label: string; active?: boolean }) {
  return (
    <div className={clsx('flex h-full min-w-0 flex-1 flex-col', active && 'bg-[#4a4a4a]')}>
      <div className="flex min-h-0 flex-1 items-center overflow-hidden whitespace-nowrap pl-[6px] pt-[3px]">
        <AppIcon kind={kind} />
        <span className="ml-[3px] text-[15.2px] tracking-[-0.03em] text-white">{label}</span>
      </div>
      <span className={clsx('h-[3px] bg-[#7db2e2]', !active && 'mx-[5px]')} />
    </div>
  )
}

function Taskbar() {
  return (
    <footer className="flex h-[101px] shrink-0 bg-[#1c1c1c] text-white">
      <div className="flex w-[184px] shrink-0 items-center pb-0.5">
        <svg viewBox="0 0 20 20" className="ml-5 h-5 w-5" fill="#fff">
          <path d="M0 2.800l9-1.200v8H0zM10 1.500L20 0v9.600H10zM0 10.500h9v8l-9-1.200zM10 10.500h10V20l-10-1.500z" />
        </svg>
        <svg viewBox="0 0 28 28" className="ml-[36px] h-7 w-7" fill="none" stroke="#fff" strokeWidth="2.5">
          <circle cx="16.500" cy="11.500" r="9.800" />
          <path d="M9.500 18.500L1 27" strokeWidth="3" />
        </svg>
        <svg viewBox="0 0 20 20" className="ml-9 h-5 w-5" fill="none" stroke="#fff" strokeWidth="1.2">
          <path d="M1 1v3h12V1M1 19v-3h12v3M1 6h12v8H1zM18 0v5M18 11v9" />
          <rect x="17" y="6.500" width="2" height="2.500" fill="#fff" />
        </svg>
      </div>
      <div className="flex w-[1485px] shrink-0 flex-col">
        <div className="flex h-[50px]">
          <div className="flex w-[52px] shrink-0 items-center justify-center pr-0.5">
            <svg viewBox="0 0 28 24" className="h-6 w-7">
              <path d="M0 1h11l2 3H0z" fill="#e59c1a" />
              <rect y="3" width="28" height="18" fill="#fcd354" />
              <path d="M5 23v-8a2 2 0 0 1 2-2h14a2 2 0 0 1 2 2v8h-4v-4H9v4z" fill="#3b8ddd" />
            </svg>
          </div>
          {topApps.map(([kind, label], i) => (
            <TaskButton key={i} kind={kind} label={label} />
          ))}
        </div>
        <div className="mt-px flex h-[50px]">
          {bottomApps.map(([kind, label], i) => (
            <TaskButton key={i} kind={kind} label={label} active={i === 10} />
          ))}
        </div>
      </div>
      <div className="flex flex-1 items-center bg-[radial-gradient(circle_at_50%_0%,#3a1f1f_0%,#1c1c1c_70%)]">
        <ChevronUp className="mb-0.5 ml-[8px] h-[21px] w-[21px]" strokeWidth={1.8} />
        <div className="ml-[9px] grid grid-cols-2 gap-x-[10px] gap-y-[29px]">
          <svg viewBox="0 0 20 20" className="h-5 w-5" fill="none" stroke="#fff" strokeWidth="1.2">
            <rect x="5" y="7" width="12.500" height="8.500" fill="#fff" />
            <path d="M18.800 9.500v3.500M1 5h4M2 5V2M4 5V2M3 5v9h3" />
          </svg>
          <svg viewBox="0 0 20 20" className="h-5 w-5" fill="none" stroke="#fff" strokeWidth="1.2">
            <path d="M1 7h3l4-4v14l-4-4H1zM10.500 7.500c1 1.500 1 3.500 0 5M13.500 5c2.300 3 2.300 7 0 10M16.500 2.500c3.500 4.500 3.500 10.500 0 15" />
          </svg>
          <svg viewBox="0 0 20 20" className="h-5 w-5" fill="none" stroke="#fff" strokeWidth="1.2">
            <path d="M6 3h13v11H4V8M8 17.500h8M12 14v3.500M1 2h4v5H1zM3 7v6" />
          </svg>
          <svg viewBox="0 0 20 20" className="h-5 w-5" fill="none" stroke="#fff" strokeWidth="1.2">
            <path d="M1 4l18-3v14M1 4v12h11M6 9a4 4 0 0 1 7-2M13 4.500v3h-3M13 10a4 4 0 0 1-7 2.500M6 15v-3" />
            <circle cx="15.500" cy="15.500" r="4.500" fill="#e81123" stroke="none" />
          </svg>
        </div>
        <div className="mb-0.5 ml-[16px] flex w-[68px] flex-col items-center whitespace-nowrap text-[14.9px] leading-[30px] tracking-[-0.03em]">
          <span>9:19 AM</span>
          <span>Friday</span>
          <span>7/18/2025</span>
        </div>
        <div className="relative mb-0.5 ml-[28px] h-5 w-5">
          <svg viewBox="0 0 20 20" className="h-5 w-5">
            <path d="M0 0h20v16h-6v4l-5-4H0z" fill="#fff" />
            <path d="M4 4.500h12M4 8h12M4 11.500h9" stroke="#1c1c1c" strokeWidth="1.2" />
          </svg>
          <span className="absolute left-[7px] top-2 flex h-6 w-6 items-center justify-center rounded-full border border-[#999] bg-[#2c2c2c] text-[12.5px] font-semibold tracking-tight">23</span>
        </div>
        <span className="ml-auto mr-[5px] h-full w-px bg-[#5a5a5a]" />
      </div>
    </footer>
  )
}

export default function App() {
  return (
    <div className="relative flex h-[1080px] w-[1920px] flex-col overflow-hidden bg-white font-['Open_Sans','Noto_Sans',sans-serif]">
      <TitleBar />
      <div className="flex min-h-0 flex-1">
        <Rail />
        <ChatList />
        <main className="flex min-w-0 flex-1 flex-col bg-white">
          <MainHeader />
          <div className="flex h-12 shrink-0 items-center border-b border-[#dedede] bg-[#efefef] pl-5 text-[13.8px] tracking-[-0.013em] text-[#424242]">
            <span className="flex-1">
              Jordan, Chad is part of an organization. It's possible they have message-related policies that will apply to the chat. <a className="text-[#4f52b2]">Learn more</a>
            </span>
            <X className="mr-[9px] h-[23px] w-[23px]" strokeWidth={1.3} />
          </div>
          <Messages />
        </main>
      </div>
      <Taskbar />
      <StatusWidget />
    </div>
  )
}
